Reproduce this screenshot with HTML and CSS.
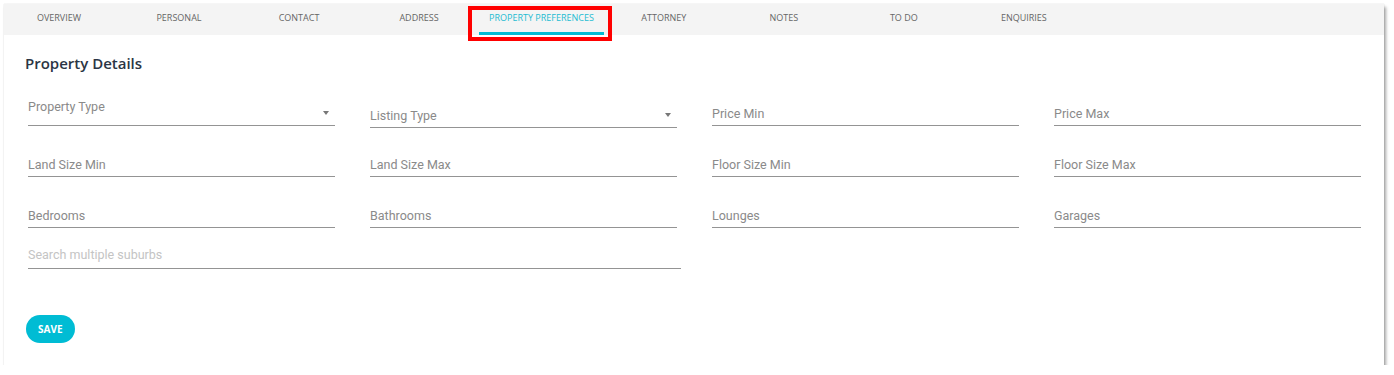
FILE: index.html
```html
<!DOCTYPE html>
<html lang="en">
<head>
  <meta charset="UTF-8" />
  <meta name="viewport" content="width=device-width, initial-scale=1" />
  <title>Contact - Property Preferences</title>
  <link rel="stylesheet" href="styles.css">
</head>
<body>

  <div class="page">
    <div class="card">

      <div class="tab-bar">
        <nav class="tabs">
          <a class="tab">Overview</a>
          <a class="tab">Personal</a>
          <a class="tab">Contact</a>
          <a class="tab">Address</a>
          <a class="tab active">Property Preferences<span class="highlight"></span></a>
          <a class="tab">Attorney</a>
          <a class="tab">Notes</a>
          <a class="tab">To Do</a>
          <a class="tab">Enquiries</a>
        </nav>
      </div>

      <div class="panel">
        <h2 class="panel-title">Property Details</h2>

        <div class="field-grid">
          <div class="field field-select field-raised">
            <span class="label">Property Type</span>
            <span class="caret"></span>
          </div>
          <div class="field field-select field-low">
            <span class="label">Listing Type</span>
            <span class="caret"></span>
          </div>
          <div class="field"><span class="label">Price Min</span></div>
          <div class="field"><span class="label">Price Max</span></div>

          <div class="field"><span class="label">Land Size Min</span></div>
          <div class="field"><span class="label">Land Size Max</span></div>
          <div class="field"><span class="label">Floor Size Min</span></div>
          <div class="field"><span class="label">Floor Size Max</span></div>

          <div class="field"><span class="label">Bedrooms</span></div>
          <div class="field"><span class="label">Bathrooms</span></div>
          <div class="field"><span class="label">Lounges</span></div>
          <div class="field"><span class="label">Garages</span></div>
        </div>

        <div class="field field-suburbs">
          <span class="placeholder">Search multiple suburbs</span>
        </div>

        <button class="btn-save" type="button">Save</button>
      </div>

    </div>
  </div>

</body>
</html>
```

FILE: styles.css
```css
body {
  margin: 0;
  background: #fff;
  font-family: Roboto, "Liberation Sans", sans-serif;
  color: #333;
}

.page {
  padding: 4px 0 0 4px;
}

.card {
  width: 1380px;
  background: #fff;
  box-shadow: 2px 3px 3px rgba(0, 0, 0, 0.35), 0 0 1px rgba(0, 0, 0, 0.2);
}

/* tabs */
.tab-bar {
  height: 31px;
  background: #f4f4f4;
}

.tabs {
  display: flex;
  margin-left: -5px;
}

.tab {
  position: relative;
  box-sizing: border-box;
  min-width: 120px;
  height: 31px;
  padding: 7px 10px 0;
  font-family: "Open Sans", sans-serif;
  font-size: 9px;
  text-transform: uppercase;
  text-align: center;
  color: #666;
  border-bottom: 3px solid transparent;
  cursor: pointer;
}

.tab.active {
  color: #1fbcd2;
  border-bottom-color: #00bcd4;
}

.highlight {
  position: absolute;
  top: 2px;
  left: -11px;
  width: 144px;
  height: 35px;
  box-sizing: border-box;
  border: 4px solid #f00;
}

/* panel */
.panel {
  padding: 0 23px 22px 24px;
}

.panel-title {
  margin: 18px 0 0 -3px;
  font-family: "Open Sans", sans-serif;
  font-size: 15px;
  font-weight: 600;
  line-height: 20px;
  color: #2b3544;
}

.field-grid {
  display: grid;
  grid-template-columns: repeat(4, 307px);
  column-gap: 35px;
  row-gap: 32px;
  align-items: end;
  margin-top: 27px;
}

.field {
  position: relative;
  padding-bottom: 4px;
  border-bottom: 1px solid #949494;
  font-size: 12.5px;
  line-height: 14px;
}

.label {
  color: #8a8a8a;
}

.field-raised {
  padding-bottom: 11px;
}

.field-low {
  margin-bottom: -2px;
}

.caret {
  position: absolute;
  right: 6px;
  bottom: 10px;
  width: 0;
  height: 0;
  border-left: 3.5px solid transparent;
  border-right: 3.5px solid transparent;
  border-top: 4px solid #777;
}

.field-suburbs {
  width: 653px;
  margin-top: 20px;
  padding-bottom: 6px;
}

.placeholder {
  color: #c4c4c4;
}

.btn-save {
  display: block;
  margin: 46px 0 0 -2px;
  height: 28px;
  padding: 0 12px;
  border: none;
  border-radius: 14px;
  background: #00bcd4;
  color: #fff;
  font-family: "Open Sans", sans-serif;
  font-size: 10px;
  font-weight: 700;
  text-transform: uppercase;
  cursor: pointer;
}
```
